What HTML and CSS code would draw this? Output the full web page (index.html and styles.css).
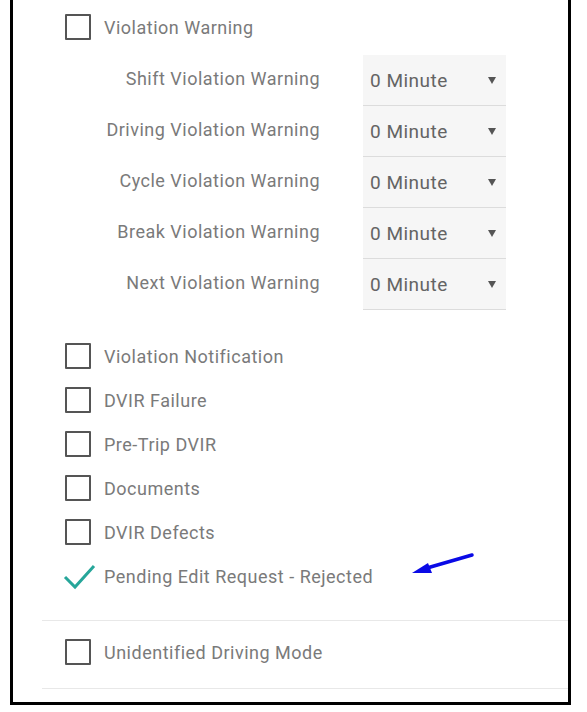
FILE: index.html
```html
<!DOCTYPE html>
<html lang="en">
<head>
    <meta charset="UTF-8">
    <meta name="viewport" content="width=device-width, initial-scale=1.0">
    <title>Notification Settings</title>
    <link rel="stylesheet" href="styles.css">
</head>
<body>
    <div class="frame">
        <!-- Alerts group -->
        <div class="group">
            <div class="check-row"><span class="box"></span><span>Violation Warning</span></div>

            <div class="warning-list">
                <div class="warning-label">Shift Violation Warning</div>
                <div class="select"><span>0 Minute</span><span class="caret"></span></div>
                <div class="warning-label">Driving Violation Warning</div>
                <div class="select"><span>0 Minute</span><span class="caret"></span></div>
                <div class="warning-label">Cycle Violation Warning</div>
                <div class="select"><span>0 Minute</span><span class="caret"></span></div>
                <div class="warning-label">Break Violation Warning</div>
                <div class="select"><span>0 Minute</span><span class="caret"></span></div>
                <div class="warning-label">Next Violation Warning</div>
                <div class="select"><span>0 Minute</span><span class="caret"></span></div>
            </div>

            <div class="check-list">
                <div class="check-row"><span class="box"></span><span>Violation Notification</span></div>
                <div class="check-row"><span class="box"></span><span>DVIR Failure</span></div>
                <div class="check-row"><span class="box"></span><span>Pre-Trip DVIR</span></div>
                <div class="check-row"><span class="box"></span><span>Documents</span></div>
                <div class="check-row"><span class="box"></span><span>DVIR Defects</span></div>
                <div class="check-row">
                    <svg class="tick" width="26" height="26" viewBox="0 0 26 26">
                        <path d="M0 14 L10 24 L29 3" fill="none" stroke="#26a69a" stroke-width="3"/>
                    </svg>
                    <span>Pending Edit Request - Rejected</span>
                </div>
            </div>
        </div>

        <!-- Driving mode group -->
        <div class="group group-small">
            <div class="check-row"><span class="box"></span><span>Unidentified Driving Mode</span></div>
        </div>

        <!-- annotation arrow -->
        <svg class="pointer" width="72" height="30" viewBox="0 0 72 30">
            <line x1="67" y1="6" x2="22" y2="19" stroke="#0a0ae6" stroke-width="3.5" stroke-linecap="round"/>
            <polygon points="7,24 23,14 27,24" fill="#0a0ae6"/>
        </svg>
    </div>
</body>
</html>
```

FILE: styles.css
```css
body {
    margin: 0;
    padding: 0 0 6px 10px;
    font-family: Roboto, "Liberation Sans", sans-serif;
    font-size: 18px;
    letter-spacing: 0.5px;
    color: #7a7a7a;
    background: #fff;
}
.frame {
    position: relative;
    width: 561px;
    box-sizing: border-box;
    border: 3px solid #000;
    border-top: 0;
    padding: 0 0 13px 29px;
}
.group {
    padding: 5px 0 22px 23px;
    border-bottom: 1px solid #e8e8e8;
}
.group-small {
    padding-top: 9px;
    padding-bottom: 14px;
}
.check-row {
    display: flex;
    align-items: center;
    gap: 13px;
    height: 44px;
}
.box {
    width: 26px;
    height: 26px;
    box-sizing: border-box;
    border: 2px solid #555;
    border-radius: 1px;
    flex-shrink: 0;
}
.tick {
    overflow: visible;
    flex-shrink: 0;
}
.warning-list {
    display: grid;
    grid-template-columns: 278px 143px;
    column-gap: 43px;
    margin: 6px 0 24px -23px;
}
.warning-label {
    display: flex;
    align-items: center;
    justify-content: flex-end;
    height: 51px;
    padding-bottom: 4px;
    box-sizing: border-box;
}
.select {
    display: flex;
    align-items: center;
    justify-content: space-between;
    height: 51px;
    box-sizing: border-box;
    padding: 0 10px 0 7px;
    background: #f6f6f6;
    border-bottom: 1px solid #dcdcdc;
    color: #646464;
    font-size: 19px;
}
.caret {
    width: 0;
    height: 0;
    border-left: 4px solid transparent;
    border-right: 4px solid transparent;
    border-top: 7px solid #555;
}
.pointer {
    position: absolute;
    left: 392px;
    top: 549px;
}
```
